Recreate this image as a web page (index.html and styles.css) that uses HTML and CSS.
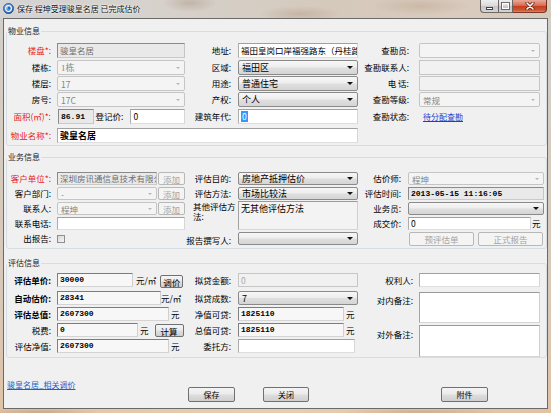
FILE: index.html
```html
<!DOCTYPE html>
<html lang="zh-CN">
<head>
<meta charset="utf-8">
<title>保存 程坤受理骏皇名居 已完成估价</title>
<link rel="stylesheet" href="styles.css">
</head>
<body>
<div class="win">
  <div class="titlebar">
    <svg class="appicon" viewBox="0 0 12 12" width="11" height="11">
      <defs>
        <radialGradient id="ig" cx="40%" cy="35%" r="70%">
          <stop offset="0" stop-color="#8cbcf0"/>
          <stop offset="1" stop-color="#1c58a8"/>
        </radialGradient>
      </defs>
      <circle cx="6" cy="6" r="5.6" fill="url(#ig)" stroke="#17457f" stroke-width=".6"/>
      <circle cx="6" cy="6" r="3.2" fill="none" stroke="#fff" stroke-width="1.2"/>
      <circle cx="6.6" cy="5.4" r="1.3" fill="#2a66b3"/>
    </svg>
    <span class="title">保存 程坤受理骏皇名居 已完成估价</span>
    <div class="caption">
      <span class="cap min"><i class="g-min"></i></span>
      <span class="cap max"><i class="g-max"></i></span>
      <span class="cap close">
        <svg viewBox="0 0 10 8" width="10" height="8">
          <path d="M2 1 L8 7 M8 1 L2 7" stroke="#5a1a10" stroke-width="3" stroke-linecap="round"/>
          <path d="M2 1 L8 7 M8 1 L2 7" stroke="#fff" stroke-width="1.6" stroke-linecap="round"/>
        </svg>
      </span>
    </div>
  </div>

  <div class="client">
    <fieldset class="grp g1">
      <legend>物业信息</legend>
      <div class="grid">
        <div class="l req">楼盘*:</div>
        <div class="f tb sunk">骏皇名居</div>
        <div class="l l3">地址:</div>
        <div class="f tb">福田皇岗口岸福强路东（丹桂路与</div>
        <div class="l l5">查勘员:</div>
        <div class="f cb"></div>

        <div class="l">楼栋:</div>
        <div class="f cb serif">1栋</div>
        <div class="l l3">区域:</div>
        <div class="f cb en">福田区</div>
        <div class="l l5">查勘联系人:</div>
        <div class="f tb dis"></div>

        <div class="l">楼层:</div>
        <div class="f cb">17</div>
        <div class="l l3">用途:</div>
        <div class="f cb en">普通住宅</div>
        <div class="l l5">电 话:</div>
        <div class="f tb dis"></div>

        <div class="l">房号:</div>
        <div class="f cb">17C</div>
        <div class="l l3">产权:</div>
        <div class="f cb en">个人</div>
        <div class="l l5">查勘等级:</div>
        <div class="f cb">常规</div>

        <div class="l req">面积(㎡)*:</div>
        <div class="pair">
          <div class="f tb sunk dark num w36">86.91</div>
          <div class="l lreg">登记价:</div>
          <div class="f tb w55">0</div>
        </div>
        <div class="l l3">建筑年代:</div>
        <div class="f tb"><span class="sel">0</span></div>
        <div class="l l5">查勘状态:</div>
        <div class="alink">待分配查勘</div>

        <div class="l req">物业名称*:</div>
        <div class="f tb cs3 bold">骏皇名居</div>
      </div>
    </fieldset>

    <fieldset class="grp g2">
      <legend>业务信息</legend>
      <div class="grid">
        <div class="l req">客户单位*:</div>
        <div class="pair">
          <div class="f tb sunk w100">深圳房讯通信息技术有限公司</div>
          <div class="f btn dis w27">添加</div>
        </div>
        <div class="l l3">评估目的:</div>
        <div class="f cb en">房地产抵押估价</div>
        <div class="l l5">估价师:</div>
        <div class="f cb">程坤</div>

        <div class="l">客户部门:</div>
        <div class="pair">
          <div class="f cb w100">-</div>
          <div class="f btn dis w27">添加</div>
        </div>
        <div class="l l3">评估方法:</div>
        <div class="f cb en">市场比较法</div>
        <div class="l l5">评估时间:</div>
        <div class="f tb sunk dark num">2013-05-15 11:16:05</div>

        <div class="l">联系人:</div>
        <div class="pair">
          <div class="f cb w100">程坤</div>
          <div class="f btn dis w27">添加</div>
        </div>
        <div class="lwrap sp2">其他评估方<br>法:</div>
        <div class="ta gray oth sp2">无其他评估方法</div>
        <div class="l l5">业务员:</div>
        <div class="f cb en"></div>

        <div class="l">联系电话:</div>
        <div class="f tb"></div>
        <div class="l l5">成交价:</div>
        <div class="pair">
          <div class="f tb w123">0</div>
          <div class="u ml1">元</div>
        </div>

        <div class="l">出报告:</div>
        <div><div class="chk"></div></div>
        <div class="l l3 lowlbl">报告撰写人:</div>
        <div class="f cb en"></div>
        <div class="pair c6">
          <div class="btn dis w65 h14 ml1">预评估单</div>
          <div class="btn dis w65 h14 ml4">正式报告</div>
        </div>
      </div>
    </fieldset>

    <fieldset class="grp g3">
      <legend>评估信息</legend>
      <div class="grid">
        <div class="l b">评估单价:</div>
        <div class="pair">
          <div class="f tb ro num w76">30000</div>
          <div class="u ml3">元/㎡</div>
          <div class="btn w23 h13 ml4 mt2">调价</div>
        </div>
        <div class="l l3">拟贷金额:</div>
        <div class="f tb dis">0</div>
        <div class="l l5">权利人:</div>
        <div class="f tb"></div>

        <div class="l b">自动估价:</div>
        <div class="pair">
          <div class="f tb ro num w104">28341</div>
          <div class="u">元/㎡</div>
        </div>
        <div class="l l3">拟贷成数:</div>
        <div class="f cb en">7</div>
        <div class="l l5 sp2 pt2">对内备注:</div>
        <div class="ta sp2 inner"></div>

        <div class="l b">评估总值:</div>
        <div class="pair">
          <div class="f tb ro num w112">2607300</div>
          <div class="u ml2">元</div>
        </div>
        <div class="l l3">净值可贷:</div>
        <div class="pair">
          <div class="f tb ro num w106">1825110</div>
          <div class="u ml2">元</div>
        </div>

        <div class="l">税费:</div>
        <div class="pair">
          <div class="f tb ro num w81">0</div>
          <div class="u ml2">元</div>
          <div class="btn w29 h13 ml6 mt1">计算</div>
        </div>
        <div class="l l3">总值可贷:</div>
        <div class="pair">
          <div class="f tb ro num w106">1825110</div>
          <div class="u ml2">元</div>
        </div>
        <div class="l l5 sp2 pt4">对外备注:</div>
        <div class="ta sp2 outer"></div>

        <div class="l">评估净值:</div>
        <div class="pair">
          <div class="f tb ro num w112">2607300</div>
          <div class="u ml2">元</div>
        </div>
        <div class="l l3">委托方:</div>
        <div class="f tb w117"></div>
      </div>
    </fieldset>

    <div class="footer">
      <div class="flink">骏皇名居_相关调价</div>
      <div class="btn fb c3f">保存</div>
      <div class="btn fb c5f">关闭</div>
      <div class="btn fb c7f">附件</div>
    </div>
  </div>
  <div class="glass-bottom"></div>
</div>
</body>
</html>
```

FILE: styles.css
```css
* { box-sizing: border-box; }
html, body { margin: 0; padding: 0; }
body {
  width: 551px; height: 413px; overflow: hidden;
  font-family: "Noto Sans CJK SC", "Noto Sans", sans-serif;
  font-size: 8.5px; color: #000;
  background: #d9c9b9;
}
.win {
  width: 551px; height: 413px;
  display: flex; flex-direction: column;
  background: linear-gradient(180deg, #d2cfcb 0, #d5ccc2 30%, #d8c8b8 70%, #dfc3a8 100%);
}

/* title bar */
.titlebar {
  height: 18px; flex: none;
  display: flex; align-items: flex-start;
  background:
    radial-gradient(ellipse 28px 9px at 190px 3px, rgba(140,110,80,.28), rgba(140,110,80,0)),
    radial-gradient(ellipse 40px 8px at 300px 14px, rgba(150,115,85,.25), rgba(150,115,85,0)),
    radial-gradient(ellipse 50px 9px at 420px 6px, rgba(160,125,95,.22), rgba(160,125,95,0)),
    linear-gradient(90deg, #d4d4d4 0, #d6d1cb 30%, #d5c9bc 60%, #d9cbbd 85%, #d6cabd 100%);
}
.appicon { flex: none; margin: 3px 0 0 3px; }
.title {
  margin: 3px 0 0 3px;
  font-size: 8px; line-height: 11px;
  color: #111; white-space: nowrap;
  text-shadow: 0 0 3px #fff, 0 0 2px #fff;
}
.caption { display: flex; margin-left: auto; margin-right: 4px; height: 13px; }
.cap {
  height: 13px; display: flex; align-items: center; justify-content: center;
  border: 1px solid rgba(70,60,55,.75); border-top: none;
}
.cap.min {
  width: 18px; border-right: none; border-radius: 0 0 0 4px;
  background: linear-gradient(#eeeeee, #dadada 50%, #c6c6c6 52%, #d4d4d4);
}
.cap.max {
  width: 15px;
  background: linear-gradient(#eeeeee, #dadada 50%, #c6c6c6 52%, #d4d4d4);
}
.cap.close {
  width: 34px; border-left: none; border-radius: 0 0 4px 0;
  border-color: rgba(90,30,20,.8);
  background: linear-gradient(#eaa898, #d96f57 45%, #c33f22 52%, #cf5630 85%, #e2884f);
}
.g-min {
  display: block; width: 7px; height: 3px; margin-top: 5px;
  background: #fff; border: 1px solid #444;
}
.g-max {
  display: block; width: 7px; height: 6px;
  border: 1px solid #fff; outline: 1px solid rgba(60,60,60,.7);
}

/* client */
.client {
  flex: none; height: 391px; margin: 0 3px;
  border: 1px solid #6a6a6a;
  background: #f0f0f0;
  display: flex; flex-direction: column;
}
.glass-bottom {
  flex: 1;
  background:
    radial-gradient(ellipse 60px 4px at 40px 3px, rgba(150,115,85,.35), rgba(150,115,85,0)),
    radial-gradient(ellipse 80px 4px at 420px 3px, rgba(150,115,85,.3), rgba(150,115,85,0)),
    linear-gradient(90deg, #e3c5a6, #e8cdb0 50%, #e2c2a2);
}

/* group boxes */
.grp {
  margin: 0 0 0 2px; padding: 0;
  border: 1px solid #d5dde3; border-radius: 3px;
  min-width: 0;
}
.grp legend {
  margin: 0; padding: 0 1px;
  font-size: 8px; line-height: 12px; color: #222;
}
.g1 { margin-top: 6px; padding: 6px 0 2px; }
.g2 { margin-top: 5px; padding: 9px 0 0; }
.g3 { margin-top: 8px; padding: 4px 0 3px; }

.grid { display: grid; align-items: start; }
.g1 .grid {
  grid-template-columns: 50px 128px 53px 120px 61px 121px;
  grid-template-rows: 17px 16px 16px 17px 19px 15px;
  --fh: 15px;
}
.g2 .grid {
  grid-template-columns: 50px 128px 53px 120px 50px 136px;
  grid-template-rows: 15px 15px 15px 15px 16px;
  --fh: 13px;
}
.g3 .grid {
  grid-template-columns: 50px 128px 53px 120px 61px 121px;
  grid-template-rows: 18px 16px 16px 16px 15px;
  --fh: 14px;
}

/* labels */
.l {
  height: var(--fh); line-height: var(--fh);
  text-align: right; white-space: nowrap;
  padding-right: 6px;
}
.l3 { padding-right: 7px; }
.g1 .l5 { padding-right: 10px; }
.g2 .l5 { padding-right: 7px; }
.g3 .l5 { padding-right: 6px; }
.req { color: #e8231b; }
.b { font-weight: bold; }
.lreg { width: 37px; padding-right: 7px; }
.lowlbl { line-height: 17px; }
.lwrap {
  grid-column: 3;
  padding-left: 8px; line-height: 10px; margin-top: -1px;
  white-space: nowrap;
}
.pt2 { padding-top: 2px; height: auto; }
.pt4 { padding-top: 4px; height: auto; }

.sp2 { grid-row: span 2; }
.cs3 { grid-column: span 3; }
.c6 { grid-column: 6; }

/* fields */
.f { height: var(--fh); }
.pair { display: flex; align-items: flex-start; }
.tb {
  border: 1px solid;
  border-color: #a0a0a0 #d6d6d6 #dedede #acacac;
  background: #fff;
  padding: 0 2px;
  white-space: nowrap; overflow: hidden;
  line-height: calc(var(--fh) - 2px);
  font-size: 8.5px;
}
.tb.sunk {
  background: #e9e9e9;
  border-color: #8a8a8a #c4c4c4 #c9c9c9 #8a8a8a;
  color: #6f6f6f;
}
.tb.dis { background: #f1f1f1; border-color: #c6c6c6; color: #a8a8a8; }
.tb.ro {
  background: #f7f7f7;
  border-color: #7c7c7c #cfcfcf #d4d4d4 #808080;
}
.num {
  font-family: "Liberation Mono", monospace;
  font-weight: bold; font-size: 8px;
}
.tb.dark { color: #000; }
.bold { font-weight: bold; font-size: 9px; }
.sel {
  display: inline-block; background: #3399ff; color: #fff;
  padding: 0 1px; line-height: 11px; vertical-align: top; margin-top: 1px;
}
.cb {
  display: flex; align-items: center;
  border: 1px solid #c5c5c5; border-radius: 2px;
  background: #f4f4f4; color: #858585;
  padding-left: 3px; white-space: nowrap; overflow: hidden;
}
.cb::after {
  content: ""; flex: none;
  margin-left: auto; margin-right: 4px;
  border-left: 2.5px solid transparent;
  border-right: 2.5px solid transparent;
  border-top: 2.5px solid #b5b5b5;
}
.cb.serif { font-family: "Liberation Serif", "Noto Sans CJK SC", serif; font-size: 9px; }
.cb.en {
  border-color: #8a8a8a;
  background: linear-gradient(#f7f7f7, #ededed 48%, #dfdfdf 52%, #d5d5d5);
  color: #000; font-size: 9px;
}
.cb.en::after {
  border-left-width: 3px; border-right-width: 3px;
  border-top: 3px solid #111;
}
.btn {
  display: flex; align-items: center; justify-content: center;
  border: 1px solid #707070; border-radius: 2px;
  background: linear-gradient(#f4f4f4, #ebebeb 45%, #dddddd 55%, #cfcfcf);
  font-size: 8.5px; color: #000; white-space: nowrap;
}
.btn.dis { border-color: #b8b8b8; background: #f4f4f4; color: #a3a3a3; }
.ta {
  border: 1px solid;
  border-color: #9a9a9a #d0d0d0 #d6d6d6 #a2a2a2;
  background: #fff;
  padding: 1px 2px;
  font-size: 9px; line-height: 11px;
}
.ta.gray { background: #f3f3f3; }
.ta.oth { grid-column: 4; height: 29px; margin-top: -1px; }
.ta.inner { margin-top: 1px; height: 31px; }
.ta.outer { margin-top: 2px; height: 32px; }
.chk {
  width: 8px; height: 8px; margin-top: 3px;
  border: 1px solid #8e8f8f;
  background: linear-gradient(135deg, #d8d8d8, #f6f6f6);
}
.alink {
  font-size: 8px; line-height: 15px; padding-left: 4px;
  color: #1d3fcf; text-decoration: underline;
}
.u { line-height: var(--fh); white-space: nowrap; }

/* sizes */
.w23 { width: 23px; } .w27 { width: 27px; margin-left: 1px; } .w29 { width: 29px; }
.w36 { width: 36px; margin-left: 1px; } .w55 { width: 55px; }
.w65 { width: 65px; } .w76 { width: 76px; } .w81 { width: 81px; }
.w100 { width: 100px; } .w104 { width: 104px; } .w106 { width: 106px; }
.w112 { width: 112px; } .w117 { width: 117px; } .w123 { width: 123px; }
.h13 { height: 13px; } .h14 { height: 14px; }
.ml1 { margin-left: 1px; } .ml2 { margin-left: 2px; } .ml3 { margin-left: 3px; }
.ml4 { margin-left: 4px; } .ml6 { margin-left: 6px; }
.mt1 { margin-top: 1px; } .mt2 { margin-top: 2px; }

/* footer */
.footer {
  display: grid;
  grid-template-columns: 3px 181px 47px 28px 46px 132px 47px;
  padding-top: 21px; align-items: start;
}
.flink {
  grid-column: 2;
  font-size: 8px; line-height: 11px;
  color: #1f5fc9; text-decoration: underline;
}
.fb { height: 15px; margin-top: 8px; font-size: 8px; }
.c3f { grid-column: 3; } .c5f { grid-column: 5; } .c7f { grid-column: 7; }
```
